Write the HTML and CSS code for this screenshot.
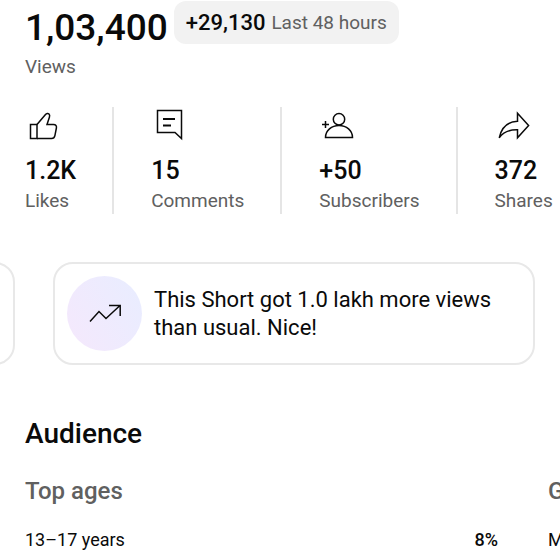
FILE: index.html
```html
<!DOCTYPE html>
<html lang="en">
<head>
  <meta charset="UTF-8">
  <meta name="viewport" content="width=device-width, initial-scale=1">
  <title>Short analytics</title>
  <link rel="stylesheet" href="styles.css">
</head>
<body>
  <main>
    <section class="summary">
      <div class="summary-row">
        <h1>1,03,400</h1>
        <p class="chip"><strong>+29,130</strong> <span>Last 48 hours</span></p>
      </div>
      <p class="label">Views</p>
    </section>

    <ul class="stats">
      <li>
        <svg class="icon" viewBox="0 0 36 36" aria-hidden="true">
          <path d="M5.5 17.5H12V31.5H5.5Z"/>
          <path d="M12 17.5L20.5 7.5C21.5 6.3 23 6.1 24 7C25 8 24.8 9 24.4 10.2L22 17.5H28.5C30.8 17.5 31.8 18.8 31.4 21L29.9 28.6C29.5 30.5 28.5 31.5 26.5 31.5H12"/>
        </svg>
        <span class="value">1.2K</span>
        <span class="label">Likes</span>
      </li>
      <li>
        <svg class="icon" viewBox="0 0 36 36" aria-hidden="true">
          <path d="M6.5 3.5H30.5V31.5L24 25.5H6.5Z"/>
          <path class="thick" d="M12 12H24M12 18.5H20"/>
        </svg>
        <span class="value">15</span>
        <span class="label">Comments</span>
      </li>
      <li>
        <svg class="icon" viewBox="0 0 36 36" aria-hidden="true">
          <circle cx="20" cy="12.3" r="5.7"/>
          <path d="M6.5 30.5C6.5 23.5 12.5 18.5 20 18.5S33.5 23.5 33.5 30.5Z"/>
          <path d="M3 17.5H10M6.5 14V21"/>
        </svg>
        <span class="value">+50</span>
        <span class="label">Subscribers</span>
      </li>
      <li>
        <svg class="icon" viewBox="0 0 36 36" aria-hidden="true">
          <path d="M22.5 6.2L33.6 18.5L22.5 30.8V22.8C14.5 22.6 8.5 24.8 4.2 30.8C6.5 20.5 13 14.6 22.5 14.3Z"/>
        </svg>
        <span class="value">372</span>
        <span class="label">Shares</span>
      </li>
    </ul>

    <section class="cards">
      <article class="card"></article>
      <article class="card">
        <div class="badge">
          <svg class="icon" viewBox="0 0 36 36" aria-hidden="true">
            <path d="M3 25.5L12 15.5L19 22.5L33 9.5M22 9.5H33.2V20"/>
          </svg>
        </div>
        <p>This Short got 1.0 lakh more views than usual. Nice!</p>
      </article>
    </section>

    <section class="audience">
      <h2>Audience</h2>
      <div class="groups">
        <div>
          <h3>Top ages</h3>
          <dl>
            <dt>13–17 years</dt>
            <dd>8%</dd>
          </dl>
        </div>
        <div>
          <h3>Gender</h3>
          <dl>
            <dt>Male</dt>
          </dl>
        </div>
      </div>
    </section>
  </main>
</body>
</html>
```
FILE: styles.css
```css
* {
  box-sizing: border-box;
}

body {
  margin: 0;
  font-family: Roboto, "Liberation Sans", sans-serif;
  font-size: 18px;
  line-height: 24px;
  color: #0a0a0a;
  background-color: #fff;
  overflow: hidden;
}

h1, h2, h3, p, ul, dl, dd {
  margin: 0;
  padding: 0;
}

.summary {
  padding: 0 25px;
}

.summary-row {
  display: flex;
  align-items: flex-start;
  gap: 6px;
  padding-top: 1px;
}

h1 {
  font-size: 37px;
  font-weight: 500;
  line-height: 54px;
}

.chip {
  display: flex;
  align-items: center;
  gap: 6px;
  height: 43px;
  padding: 0 12px;
  border-radius: 12px;
  background-color: #f2f2f2;
  white-space: nowrap;
}

.chip strong {
  font-size: 22px;
  font-weight: 500;
}

.chip span,
.label {
  font-size: 19px;
  color: #606060;
}

.stats {
  display: flex;
  list-style: none;
  margin-top: 28px;
  padding-left: 25px;
}

.stats li {
  display: flex;
  flex-direction: column;
  padding: 0 36px 0 37px;
  border-left: 2px solid #e5e5e5;
}

.stats li:first-child {
  padding-left: 0;
  border-left: none;
}

.stats li:last-child {
  padding-right: 0;
}

.icon {
  width: 36px;
  height: 36px;
  fill: none;
  stroke: #0a0a0a;
  stroke-width: 1.5;
}

.icon .thick {
  stroke-width: 2.2;
}

.value {
  margin-top: 12px;
  font-size: 25px;
  font-weight: 500;
  line-height: 32px;
}

.stats .label {
  line-height: 26px;
  padding-top: 1px;
}

.cards {
  display: flex;
  justify-content: flex-end;
  gap: 38px;
  margin-top: 48px;
  padding-right: 25px;
  overflow: hidden;
}

.card {
  display: flex;
  flex: 0 0 calc(100% - 53px);
  align-items: center;
  gap: 12px;
  padding: 12px;
  border: 2px solid #e8e8e8;
  border-radius: 20px;
  font-size: 22px;
  line-height: 28px;
}

.badge {
  display: flex;
  flex: none;
  align-items: center;
  justify-content: center;
  width: 75px;
  height: 75px;
  border-radius: 50%;
  background: linear-gradient(60deg, #f5e8fc, #e8edff);
}

.audience {
  margin-top: 50px;
  padding-left: 25px;
}

h2 {
  font-size: 28px;
  font-weight: 500;
  line-height: 38px;
}

.groups {
  display: grid;
  grid-template-columns: calc(100% - 62px) max-content;
  gap: 50px;
  margin-top: 23px;
}

h3 {
  font-size: 24px;
  font-weight: 500;
  line-height: 30px;
  color: #606060;
}

dl {
  display: flex;
  justify-content: space-between;
  margin-top: 22px;
}

dd {
  font-weight: 500;
}
```
